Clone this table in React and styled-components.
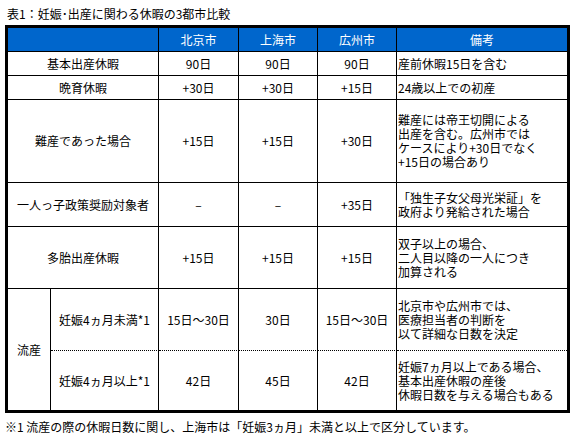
import React from "react";
import styled, { createGlobalStyle } from "styled-components";

const Global = createGlobalStyle`
  html, body { margin: 0; padding: 0; background: #fff; }
  body {
    font-family: "Noto Sans CJK JP", "Noto Sans", sans-serif;
    font-size: 12px;
    color: #000;
  }
  * { box-sizing: border-box; }
`;

const Page = styled.div`
  width: 575px;
  height: 442px;
  padding: 7px 0 0 5px;
`;

const Title = styled.div`
  line-height: 14px;
  padding-left: 2px;
  margin-bottom: 4px;
`;

const Grid = styled.div`
  display: grid;
  width: 565px;
  grid-template-columns: 43px 108px 80px 79px 79px 170px;
  grid-template-rows: 24px 24px 24px 83px 44px 62px 62px 59px;
  border: 3px solid #000;
`;

const Cell = styled.div`
  display: flex;
  align-items: center;
  justify-content: ${(p) => (p.$left ? "flex-start" : "center")};
  text-align: ${(p) => (p.$left ? "left" : "center")};
  padding: ${(p) => (p.$left ? "0 0 0 1px" : "0")};
  line-height: 14px;
  white-space: nowrap;
  grid-column: ${(p) => (p.$span ? `span ${p.$span}` : "auto")};
  grid-row: ${(p) => (p.$rows ? `span ${p.$rows}` : "auto")};
  border-right: ${(p) => (p.$end ? "none" : "1px solid #000")};
  border-bottom: ${(p) =>
    p.$bottom === "none"
      ? "none"
      : p.$bottom === "dotted"
      ? "1px dotted #000"
      : "1px solid #000"};
  background: ${(p) => (p.$head ? "#0066cc" : "#fff")};
  color: ${(p) => (p.$head ? "#fff" : "#000")};
`;

const Lines = styled.div`
  display: flex;
  flex-direction: column;
`;

const Footnote = styled.div`
  margin-top: 7px;
  line-height: 14px;
`;

const cities = ["北京市", "上海市", "広州市"];

const rows = [
  { label: "基本出産休暇", vals: ["90日", "90日", "90日"], note: ["産前休暇15日を含む"] },
  { label: "晩育休暇", vals: ["+30日", "+30日", "+15日"], note: ["24歳以上での初産"] },
  {
    label: "難産であった場合",
    vals: ["+15日", "+15日", "+30日"],
    note: ["難産には帝王切開による", "出産を含む。広州市では", "ケースにより+30日でなく", "+15日の場合あり"],
  },
  {
    label: "一人っ子政策奨励対象者",
    vals: ["–", "–", "+35日"],
    note: ["「独生子女父母光栄証」を", "政府より発給された場合"],
  },
  {
    label: "多胎出産休暇",
    vals: ["+15日", "+15日", "+15日"],
    note: ["双子以上の場合、", "二人目以降の一人につき", "加算される"],
  },
];

const miscarriage = [
  {
    label: "妊娠4ヵ月未満*1",
    vals: ["15日～30日", "30日", "15日～30日"],
    note: ["北京市や広州市では、", "医療担当者の判断を", "以て詳細な日数を決定"],
    bottom: "dotted",
  },
  {
    label: "妊娠4ヵ月以上*1",
    vals: ["42日", "45日", "42日"],
    note: ["妊娠7ヵ月以上である場合、", "基本出産休暇の産後", "休暇日数を与える場合もある"],
    bottom: "none",
  },
];

const Note = ({ lines, bottom }) => (
  <Cell $left $end $bottom={bottom}>
    <Lines>
      {lines.map((l, i) => (
        <span key={i}>{l}</span>
      ))}
    </Lines>
  </Cell>
);

export default function App() {
  return (
    <Page>
      <Global />
      <Title>表1：妊娠･出産に関わる休暇の3都市比較</Title>
      <Grid>
        <Cell $head $span={2} />
        {cities.map((c) => (
          <Cell $head key={c}>{c}</Cell>
        ))}
        <Cell $head $end>備考</Cell>

        {rows.map((r) => (
          <React.Fragment key={r.label}>
            <Cell $span={2}>{r.label}</Cell>
            {r.vals.map((v, i) => (
              <Cell key={i}>{v}</Cell>
            ))}
            <Note lines={r.note} />
          </React.Fragment>
        ))}

        <Cell $rows={2} $bottom="none">流産</Cell>
        {miscarriage.map((r) => (
          <React.Fragment key={r.label}>
            <Cell $bottom={r.bottom}>{r.label}</Cell>
            {r.vals.map((v, i) => (
              <Cell key={i} $bottom={r.bottom}>{v}</Cell>
            ))}
            <Note lines={r.note} bottom={r.bottom} />
          </React.Fragment>
        ))}
      </Grid>
      <Footnote>※1 流産の際の休暇日数に関し、上海市は「妊娠3ヵ月」未満と以上で区分しています。</Footnote>
    </Page>
  );
}
